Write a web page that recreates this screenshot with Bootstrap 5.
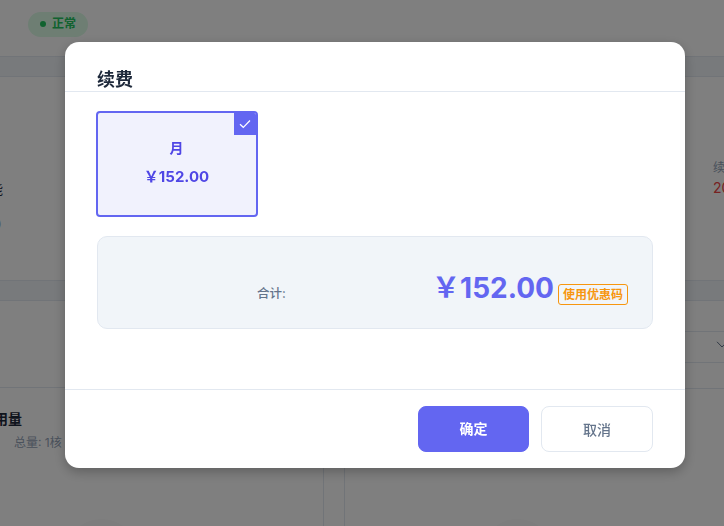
<!DOCTYPE html>
<html lang="zh-CN">
<head>
<meta charset="utf-8">
<title>续费</title>
<link href="https://cdn.jsdelivr.net/npm/bootstrap@5.3.0/dist/css/bootstrap.min.css" rel="stylesheet">
<style>
html, body { height: 526px; overflow: hidden; }
body { font-family: Inter, "Noto Sans CJK SC", sans-serif; background: #fff; color: #1e293b; }
.modal-backdrop.show { opacity: .5; background: #000; }
.bg-page { height: 526px; overflow: hidden; }
.bg-head { height: 56px; padding: 9px 28px 0; }
.state-pill { height: 25px; width: 60px; border-radius: 13px; background: #dcfce7; color: #22c55e; font-size: 12px; font-weight: 600; gap: 6px; padding-left: 12px; }
.state-dot { width: 6px; height: 6px; border-radius: 50%; background: #22c55e; }
.bg-band { height: 21px; background: #f1f5f9; border-top: 1px solid #e2e8f0; border-bottom: 1px solid #e2e8f0; }
.info-zone { height: 203px; padding-top: 81px; }
.info-left { margin-left: -23px; font-size: 13px; line-height: 18px; white-space: nowrap; width: 16px; }
.info-left-top { margin-top: 22px; }
.info-left-sub { margin: 17px 0 0 16px; color: #94a3b8; }
.info-right { margin-left: 720px; width: 60px; font-size: 12px; line-height: 20px; color: #94a3b8; white-space: nowrap; }
.info-date { color: #ef4444; font-size: 14px; }
.bg-lower { height: 228px; }
.low-left { width: 324px; flex: none; border-right: 1px solid #e2e8f0; }
.low-top { height: 87px; border-bottom: 1px solid #e2e8f0; margin-bottom: 20px; }
.low-gap { width: 21px; flex: none; border-right: 1px solid #e2e8f0; }
.low-right { flex: 1; padding-top: 30px; }
.low-title { font-size: 14px; font-weight: 600; margin-left: -20px; line-height: 22px; white-space: nowrap; }
.low-sub { font-size: 12px; color: #94a3b8; margin: 4px 0 0 14px; line-height: 18px; white-space: nowrap; }
.low-select { height: 32px; border-top: 1px solid #e2e8f0; border-bottom: 1px solid #e2e8f0; }
.low-select svg { margin: -5px -4px 0 0; }
.low-rule { height: 26px; border-bottom: 1px solid #e2e8f0; }
.gauge-disc { width: 73px; height: 73px; border-radius: 50%; background: #fafafa; }
.gauge-left { margin: 67px 0 0 65px; }
.gauge-right { margin: 130px 0 0 136px; }
.modal.show-flat { display: block; }
.renew-dialog { width: 620px; max-width: none; margin: 42px 0 0 65px; }
.renew-content { height: 426px; border: 0; border-radius: 14px; box-shadow: 0 4px 12px rgba(0, 0, 0, .25); }
.renew-header { height: 50px; padding: 0 32px; border-bottom: 1px solid #e2e8f0; align-items: flex-end; }
.renew-title { font-size: 18px; font-weight: 600; line-height: 24px; margin-bottom: -1px; color: #1e293b; }
.renew-body { padding: 19px 32px 0; }
.plan-tile { width: 162px; height: 106px; margin-left: -1px; border: 2px solid #6366f1; border-radius: 4px; background: #f1f2fd; color: #4f46e5; font-weight: 700; gap: 7px; position: relative; overflow: hidden; padding: 0 1px 3px 0; }
.plan-name { font-size: 14px; line-height: 22px; }
.plan-price { font-size: 15px; line-height: 22px; }
.plan-check { position: absolute; top: 0; right: 0; width: 22px; height: 22px; background: #6366f1; }
.total-box { height: 93px; margin-top: 19px; background: #f1f5f9; border: 1px solid #e2e8f0; border-radius: 10px; padding: 0 24px 0 0; }
.total-label { font-size: 12.5px; color: #64748b; width: 160px; margin-left: 159px; font-weight: 500; line-height: 16px; margin-top: 49px; }
.total-amount { font-size: 28px; font-weight: 700; color: #6366f1; line-height: 36px; margin-top: 33px; white-space: nowrap; }
.coupon-tag { font-size: 12px; font-weight: 700; color: #f7960f; border: 1px solid #f7960f; border-radius: 3px; height: 21px; line-height: 19px; padding: 0 4px; margin: 47px 0 0 4px; white-space: nowrap; }
.renew-footer { height: 79px; padding: 16px 32px 0; border-top: 1px solid #e2e8f0; gap: 12px; flex-shrink: 0; }
.btn-ok, .btn-no { width: 112px; height: 46px; font-size: 14px; border-radius: 8px; padding: 0; }
.btn-ok { background: #6366f1; border-color: #6366f1; color: #fff; font-weight: 600; width: 111px; padding-bottom: 2px; }
.btn-no { background: #fff; border-color: #e2e8f0; color: #64748b; font-weight: 500; }
.renew-spacer { flex: 1; }
</style>
</head>
<body>
<div class="bg-page">
  <div class="bg-head">
    <span class="state-pill d-inline-flex align-items-center"><span class="state-dot"></span>正常</span>
  </div>
  <div class="bg-band"></div>
  <div class="info-zone d-flex">
    <div class="info-left"><div class="info-left-top">性能</div><div class="info-left-sub">0</div></div>
    <div class="info-right">续费时间<br><span class="info-date">2024</span></div>
  </div>
  <div class="bg-band"></div>
  <div class="bg-lower d-flex">
    <div class="low-left">
      <div class="low-top"></div>
      <div class="low-title">使用量</div>
      <div class="low-sub">总量: 1核</div>
      <div class="gauge-disc gauge-left"></div>
    </div>
    <div class="low-gap"></div>
    <div class="low-right">
      <div class="low-select d-flex align-items-center justify-content-end">
        <svg width="12" height="7" viewBox="0 0 12 7" fill="none" stroke="#64748b"><path d="M1 .8 6 6 11 .8"/></svg>
      </div>
      <div class="low-rule"></div>
      <div class="gauge-disc gauge-right"></div>
    </div>
  </div>
</div>

<div class="modal-backdrop show"></div>
<div class="modal show-flat" role="dialog" aria-modal="true">
  <div class="modal-dialog renew-dialog">
    <div class="modal-content renew-content d-flex flex-column">
      <div class="modal-header renew-header">
        <h5 class="modal-title renew-title">续费</h5>
      </div>
      <div class="modal-body renew-body">
        <div class="plan-tile d-flex flex-column align-items-center justify-content-center">
          <span class="plan-check d-flex align-items-center justify-content-center">
            <svg width="12" height="10" viewBox="0 0 12 10" fill="none" stroke="#fff" stroke-width="1.2"><path d="M1 5.2 4.3 8.3 11 1.5"/></svg>
          </span>
          <div class="plan-name">月</div>
          <div class="plan-price">￥152.00</div>
        </div>
        <div class="total-box d-flex justify-content-between">
          <span class="total-label">合计:</span>
          <span class="renew-spacer"></span>
          <span class="total-amount">￥152.00</span>
          <span class="coupon-tag">使用优惠码</span>
        </div>
      </div>
      <div class="modal-footer renew-footer align-items-start justify-content-end">
        <button type="button" class="btn btn-ok m-0">确定</button>
        <button type="button" class="btn btn-no m-0">取消</button>
      </div>
    </div>
  </div>
</div>
<script src="https://cdn.jsdelivr.net/npm/bootstrap@5.3.0/dist/js/bootstrap.bundle.min.js"></script>
</body>
</html>
